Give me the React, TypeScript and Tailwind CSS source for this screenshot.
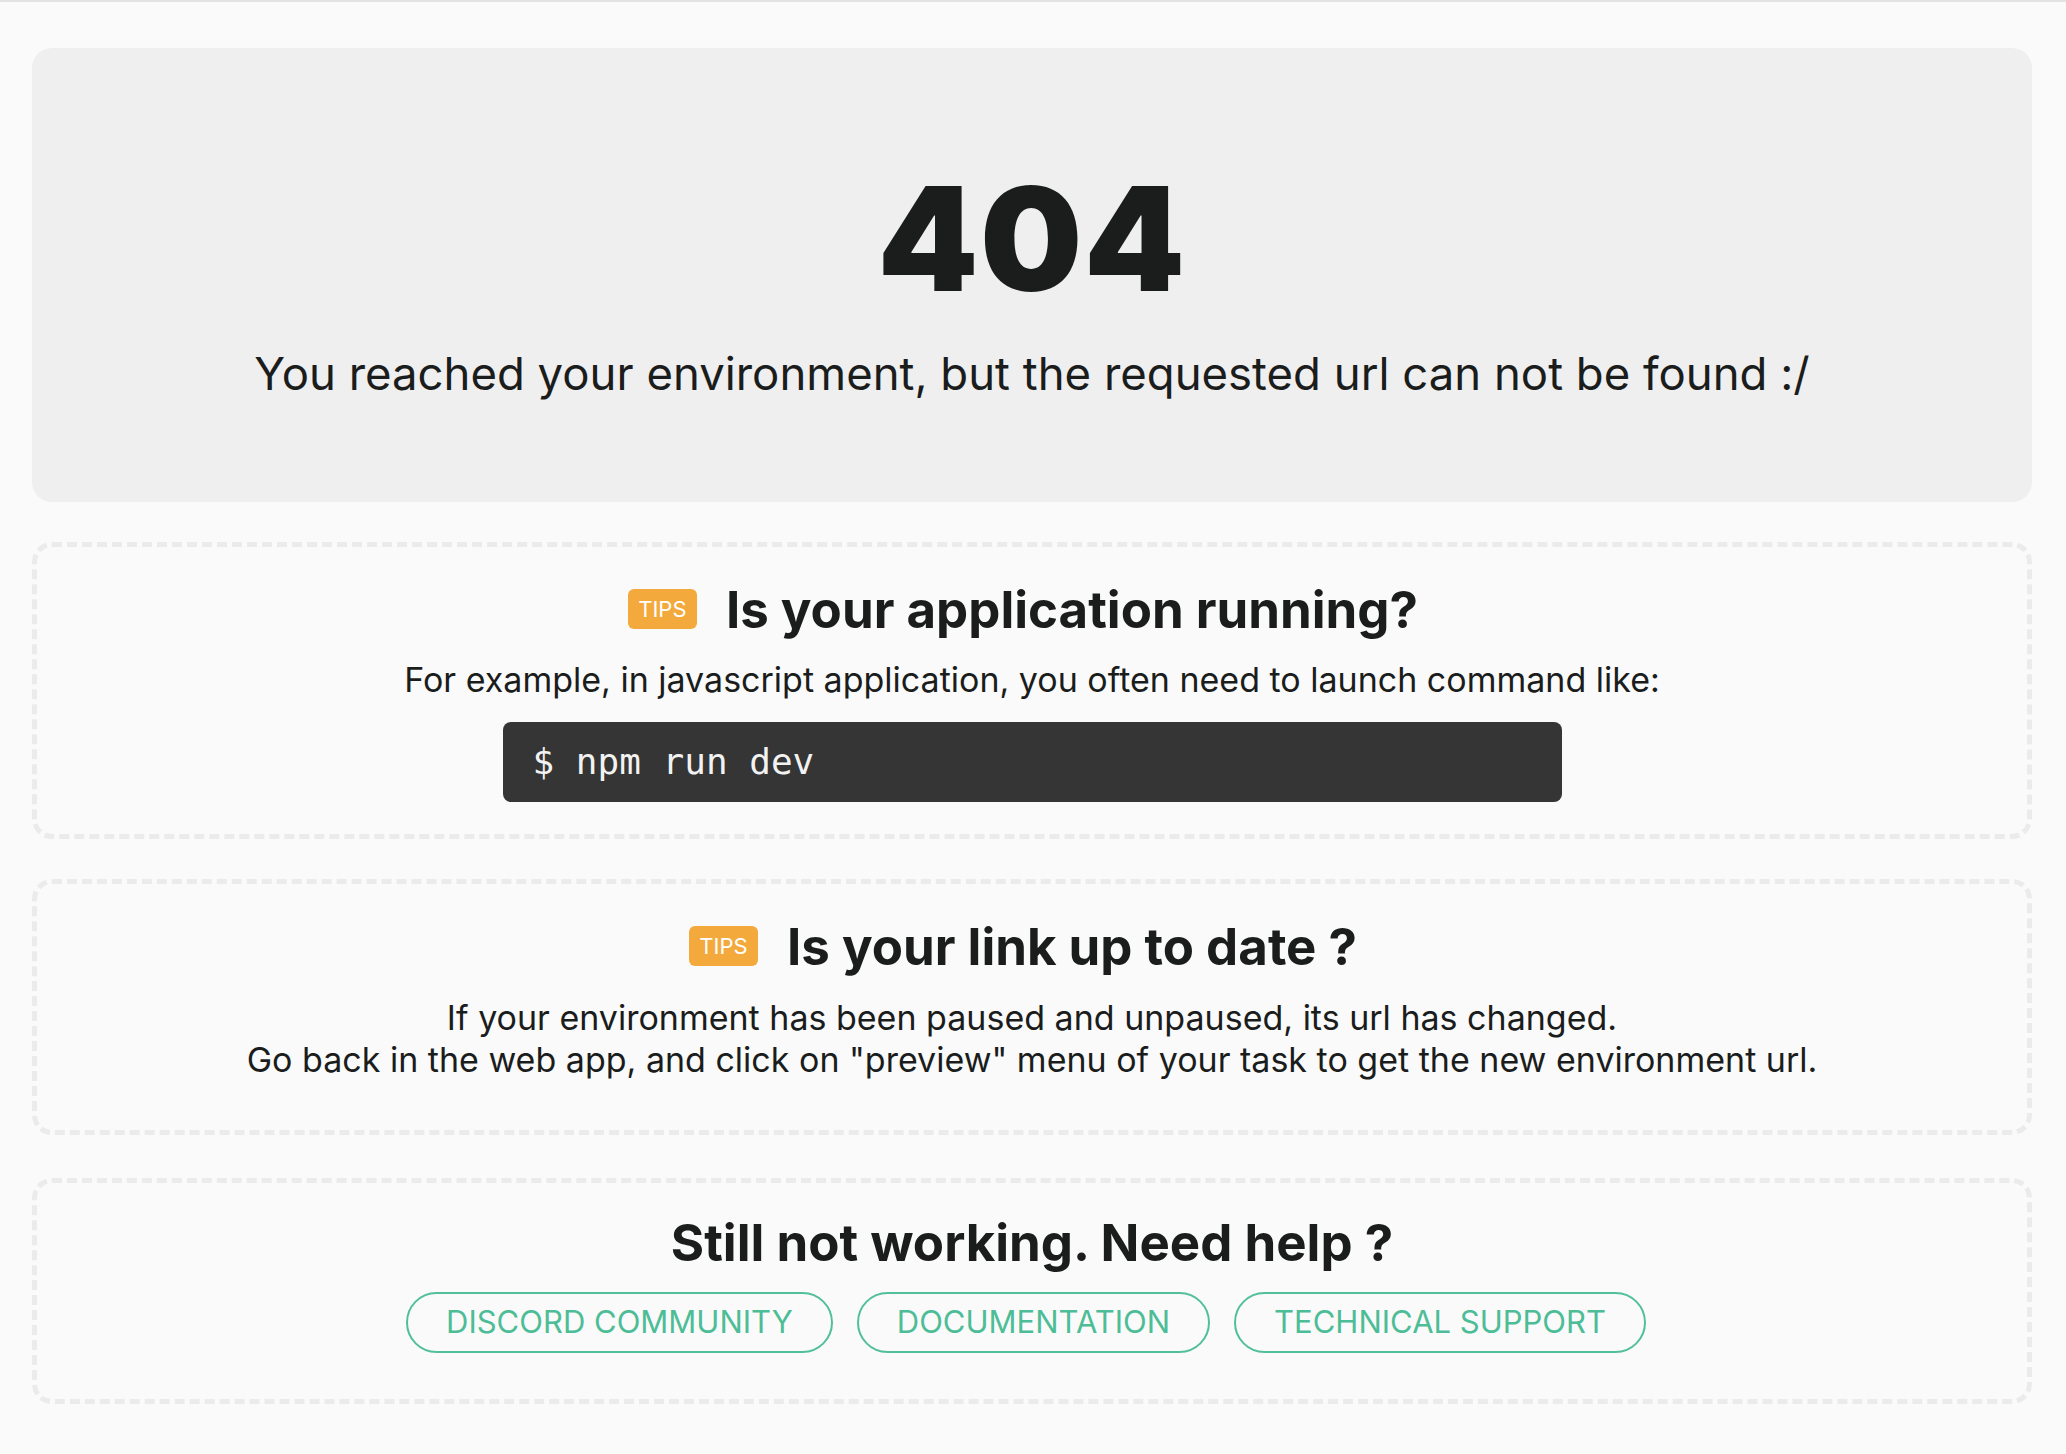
import React from 'react';

const links = ['DISCORD COMMUNITY', 'DOCUMENTATION', 'TECHNICAL SUPPORT'];

function Tips() {
    return (
        <span className="flex h-[40px] w-[69px] items-center justify-center rounded-[6px] bg-[#f3a93c] text-[22px] leading-none text-white">
            TIPS
        </span>
    );
}

export default function App() {
    return (
        <div
            className="min-h-screen border-t-2 border-[#e3e3e3] bg-[#fafafa] pl-8 pr-[34px] pt-[46px] pb-12 text-[#1b1d1d]"
            style={{ fontFamily: 'Inter, "Noto Sans", sans-serif' }}
        >
            <div className="flex flex-col gap-10">
                {/* hero */}
                <section className="flex h-[454px] flex-col items-center rounded-[20px] bg-[#efefef] pt-[119px]">
                    <h1 className="text-[144px] font-black leading-none tracking-[0.01em]">404</h1>
                    <p className="mt-[27px] text-[45.5px] leading-[72px]">
                        You reached your environment, but the requested url can not be found :/
                    </p>
                </section>

                {/* tip 1 */}
                <section className="flex h-[297px] flex-col items-center rounded-[20px] border-[5px] border-dashed border-[#ebebeb] pt-[32px]">
                    <div className="flex h-[60px] items-center gap-[29px] pr-[18px]">
                        <Tips />
                        <h2 className="text-[51px] font-bold leading-none">Is your application running?</h2>
                    </div>
                    <p className="mt-[20px] text-[34px] leading-[42px]">
                        For example, in javascript application, you often need to launch command like:
                    </p>
                    <div
                        className="mt-[21px] flex h-[80px] w-[1059px] items-center rounded-[8px] bg-[#353535] pl-[30px] text-[36px] text-[#f2f2f2]"
                        style={{ fontFamily: '"DejaVu Sans Mono", monospace' }}
                    >
                        $ npm run dev
                    </div>
                </section>

                {/* tip 2 */}
                <section className="flex h-[256px] flex-col items-center rounded-[20px] border-[5px] border-dashed border-[#ebebeb] pt-[32px]">
                    <div className="flex h-[60px] items-center gap-[29px] pr-[18px]">
                        <Tips />
                        <h2 className="text-[51px] font-bold leading-none">Is your link up to date ?</h2>
                    </div>
                    <div className="mt-[21px] text-center text-[34px] leading-[42px]">
                        <p>If your environment has been paused and unpaused, its url has changed.</p>
                        <p>Go back in the web app, and click on "preview" menu of your task to get the new environment url.</p>
                    </div>
                </section>

                {/* help */}
                <section className="mt-[3px] flex h-[226px] flex-col items-center rounded-[20px] border-[5px] border-dashed border-[#ebebeb] pt-[29px]">
                    <h2 className="flex h-[60px] items-center text-[51px] font-bold leading-none">
                        Still not working. Need help ?
                    </h2>
                    <div className="mt-[20px] flex gap-[24px] pr-[12px]">
                        {links.map((label) => (
                            <a
                                key={label}
                                href="#"
                                className="flex h-[61px] items-center rounded-full border-2 border-[#52bf9b] px-[38px] text-[31px] text-[#4dbd97]"
                            >
                                {label}
                            </a>
                        ))}
                    </div>
                </section>
            </div>
        </div>
    );
}
